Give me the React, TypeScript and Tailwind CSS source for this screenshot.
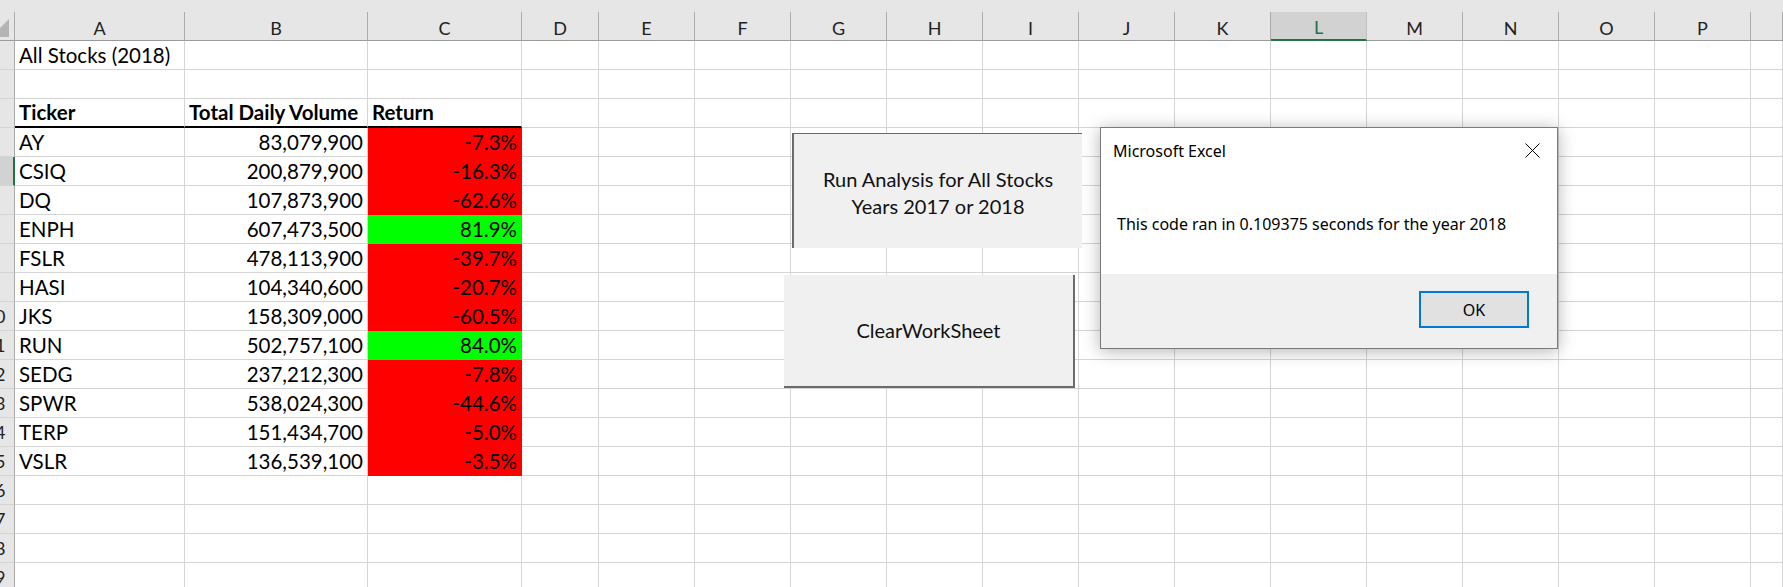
import React from "react";

type Row = { a?: string; b?: string; c?: string; fill?: "red" | "green"; bold?: boolean; underline?: boolean };

const rows: Row[] = [
  { a: "All Stocks (2018)" },
  {},
  { a: "Ticker", b: "Total Daily Volume", c: "Return", bold: true, underline: true },
  { a: "AY", b: "83,079,900", c: "-7.3%", fill: "red" },
  { a: "CSIQ", b: "200,879,900", c: "-16.3%", fill: "red" },
  { a: "DQ", b: "107,873,900", c: "-62.6%", fill: "red" },
  { a: "ENPH", b: "607,473,500", c: "81.9%", fill: "green" },
  { a: "FSLR", b: "478,113,900", c: "-39.7%", fill: "red" },
  { a: "HASI", b: "104,340,600", c: "-20.7%", fill: "red" },
  { a: "JKS", b: "158,309,000", c: "-60.5%", fill: "red" },
  { a: "RUN", b: "502,757,100", c: "84.0%", fill: "green" },
  { a: "SEDG", b: "237,212,300", c: "-7.8%", fill: "red" },
  { a: "SPWR", b: "538,024,300", c: "-44.6%", fill: "red" },
  { a: "TERP", b: "151,434,700", c: "-5.0%", fill: "red" },
  { a: "VSLR", b: "136,539,100", c: "-3.5%", fill: "red" },
  {},
  {},
  {},
  {},
];

const letters = ["A", "B", "C", "D", "E", "F", "G", "H", "I", "J", "K", "L", "M", "N", "O", "P", ""];

const cellFont = "font-[family-name:Lato,sans-serif] text-[20.5px] leading-none text-black";

function RowHeader({ n }: { n: number }) {
  const sel = n === 5;
  return (
    <div
      className={
        "h-[29px] overflow-hidden flex items-center border-b border-b-[#d4d4d4] " +
        (sel ? "bg-[#d2d2d2] border-r-2 border-r-[#217346]" : "bg-[#e6e6e6] border-r border-r-[#ababab]")
      }
    >
      <div className="w-[30px] -ml-[20px] shrink-0 text-center font-[family-name:Lato,sans-serif] text-[18px] leading-none text-[#222]">
        {n}
      </div>
    </div>
  );
}

function DataRow({ r, n }: { r: Row; n: number }) {
  const base = "h-[29px] flex items-center px-[4px] whitespace-nowrap border-r border-b " + cellFont;
  const under = r.underline ? " border-b-2 border-b-black border-r-[#d4d4d4]" : " border-[#d4d4d4]";
  const weight = r.bold ? " font-bold" : "";
  let cClass = base + weight;
  if (r.fill === "red") cClass += " bg-[#ff0000] border-[#ff0000] justify-end";
  else if (r.fill === "green") cClass += " bg-[#00ff00] border-[#00ff00] justify-end";
  else cClass += under;
  return (
    <>
      <RowHeader n={n} />
      <div className={base + under + weight}>{r.a}</div>
      <div className={base + under + weight + (r.bold ? "" : " justify-end")}>{r.b}</div>
      <div className={cClass}>{r.c}</div>
      {letters.slice(3).map((l, i) => (
        <div key={i} className="h-[29px] border-r border-b border-[#d4d4d4]" />
      ))}
    </>
  );
}

export default function App() {
  return (
    <div className="relative w-[1783px] h-[587px] overflow-hidden bg-white">
      <div className="h-[12px] bg-[#e6e6e6]" />
      <div className="grid grid-cols-[15px_170px_183px_154px_77px_repeat(12,96px)_1fr]">
        <div className="h-[29px] bg-[#e6e6e6] border-r border-b border-r-[#ababab] border-b-[#9b9b9b]">
          <svg width="14" height="28" viewBox="0 0 14 28">
            <polygon points="9,7 9,25 0,25 0,16" fill="#b4b4b4" />
          </svg>
        </div>
        {letters.map((l, i) => (
          <div
            key={i}
            className={
              "h-[29px] flex items-center justify-center pt-[3px] border-r font-[family-name:Lato,sans-serif] text-[18px] leading-none " +
              (l === "L"
                ? "bg-[#d2d2d2] border-r-[#c0c0c0] border-b-2 border-b-[#217346] text-[#217346]"
                : "bg-[#e6e6e6] border-r-[#ababab] border-b border-b-[#9b9b9b] text-[#222]")
            }
          >
            {l}
          </div>
        ))}
        {rows.map((r, i) => (
          <DataRow key={i} r={r} n={i + 1} />
        ))}
      </div>

      <div className="absolute left-[792px] top-[133px] w-[290px] h-[115px] bg-[#f0f0f0] border-t border-l-2 border-[#6b6b6b] flex flex-col items-center justify-center pt-[3px] font-[family-name:Lato,sans-serif] text-[20px] leading-[27px] text-[#111]">
        <div>Run Analysis for All Stocks</div>
        <div>Years 2017 or 2018</div>
      </div>

      <div className="absolute left-[784px] top-[275px] w-[291px] h-[113px] bg-[#f0f0f0] border-r-2 border-b-2 border-[#6b6b6b] flex items-center justify-center font-[family-name:Lato,sans-serif] text-[20px] leading-[27px] text-[#111]">
        ClearWorkSheet
      </div>

      <div className="absolute left-[1100px] top-[127px] w-[458px] h-[222px] bg-white border border-[#7a7a7a] shadow-[0_2px_16px_rgba(0,0,0,0.3)] flex flex-col font-[family-name:'Noto_Sans',sans-serif] text-[16px] text-black">
        <div className="h-[45px] flex items-center justify-between pl-[12px] pr-[17px]">
          <span>Microsoft Excel</span>
          <svg width="15" height="15" viewBox="0 0 15 15">
            <path d="M0.5 0.5 L14.5 14.5 M14.5 0.5 L0.5 14.5" stroke="#000" strokeWidth="1" />
          </svg>
        </div>
        <div className="h-[101px] flex items-center pl-[16px]">
          This code ran in 0.109375 seconds for the year 2018
        </div>
        <div className="flex-1 bg-[#f0f0f0] flex justify-end items-start pt-[17px] pr-[28px]">
          <div className="w-[110px] h-[37px] border-2 border-[#0078d7] bg-[#e1e1e1] flex items-center justify-center">
            OK
          </div>
        </div>
      </div>
    </div>
  );
}
